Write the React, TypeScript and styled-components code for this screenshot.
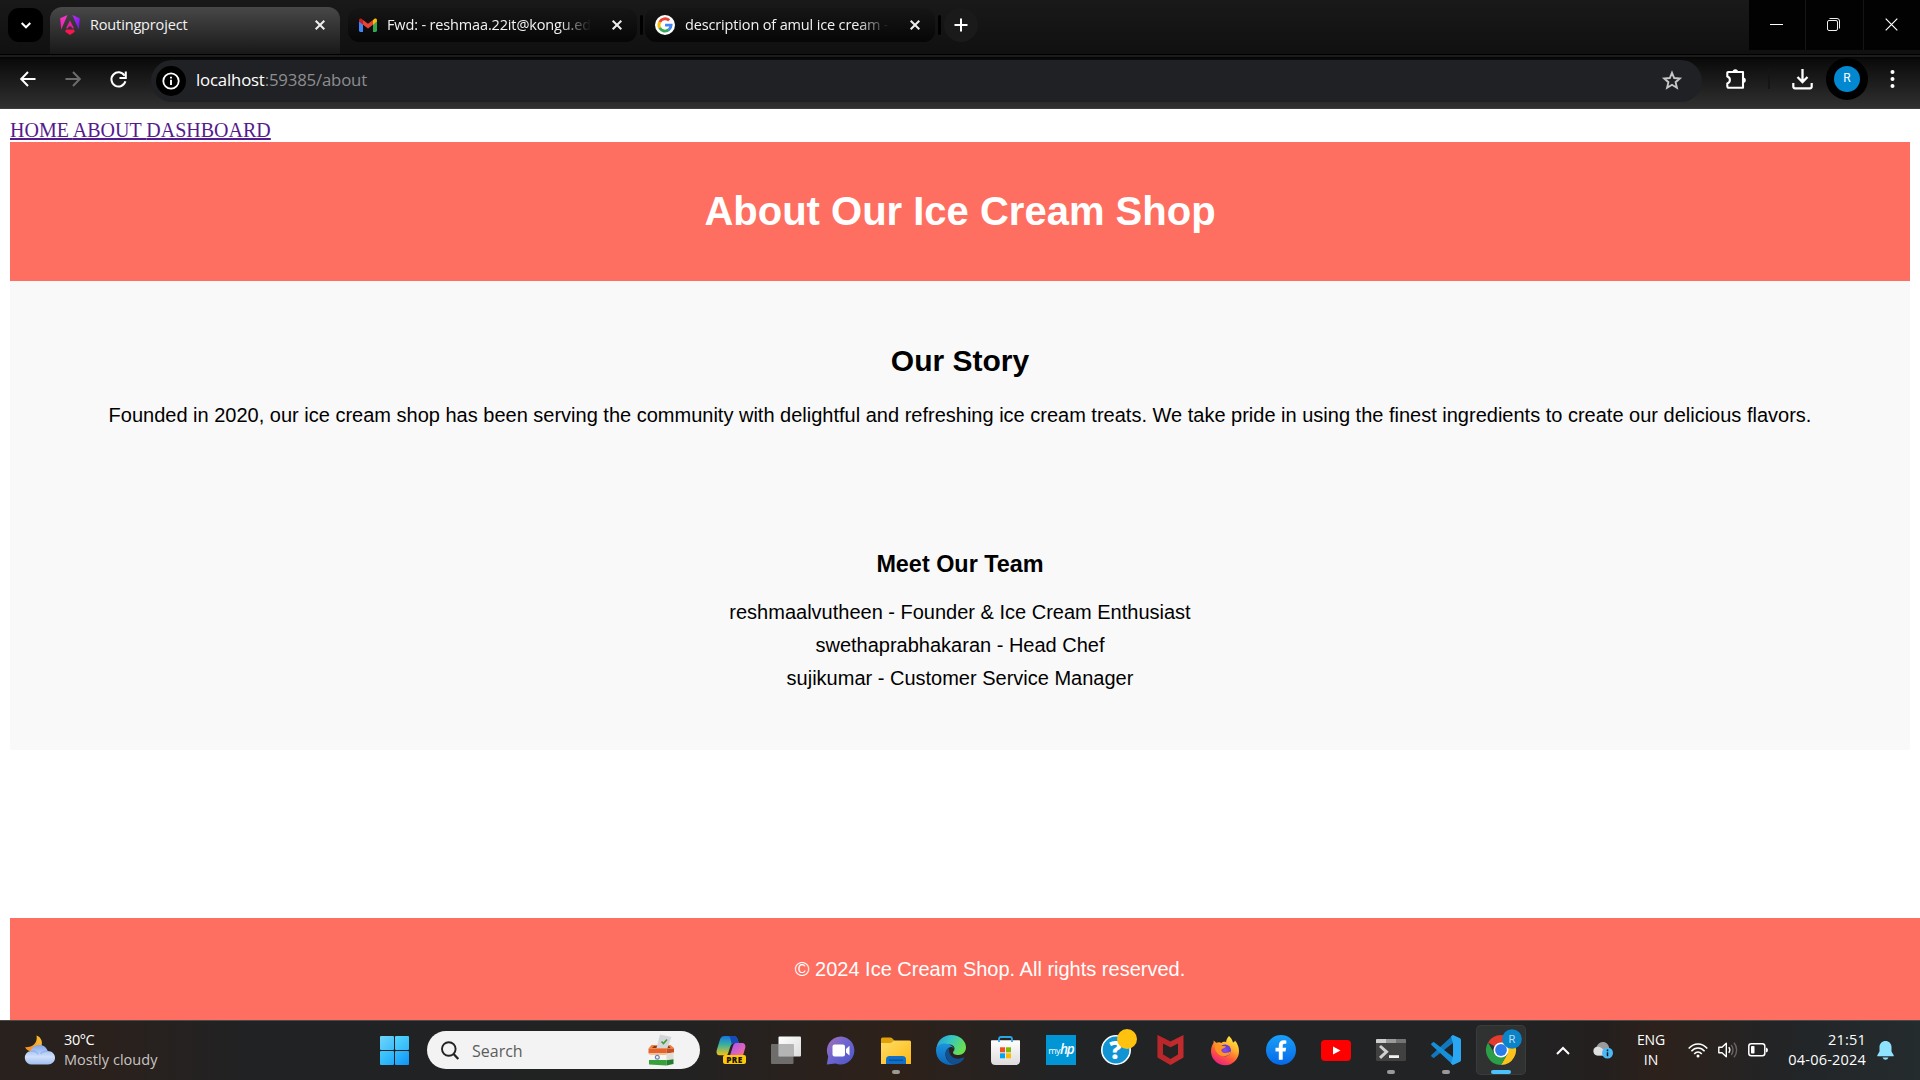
import React from "react";
import styled, { createGlobalStyle } from "styled-components";

const ui = '"Open Sans", "Noto Sans", sans-serif';
const coral = "#ff6f61";

const GlobalStyle = createGlobalStyle`
  *, *::before, *::after { box-sizing: border-box; }
  html, body { margin: 0; padding: 0; overflow: hidden; }
  svg { display: block; flex: none; overflow: visible; }
`;

const Screen = styled.div`
  width: 1920px;
  height: 1080px;
  display: flex;
  flex-direction: column;
  overflow: hidden;
  background: #fff;
`;

/* ---------- browser chrome ---------- */

const TabStrip = styled.div`
  height: 54px;
  flex: none;
  display: flex;
  align-items: flex-start;
  padding-left: 8px;
  background: linear-gradient(#191919, #101010);
`;

const TabSearch = styled.div`
  width: 35px;
  height: 34px;
  margin: 8px 7px 0 0;
  border-radius: 11px;
  background: #000;
  display: flex;
  align-items: center;
  justify-content: center;
`;

const Tab = styled.div<{ $active?: boolean; $width: number; $gap?: number }>`
  width: ${(p) => p.$width}px;
  height: ${(p) => (p.$active ? 47 : 34)}px;
  margin-top: ${(p) => (p.$active ? 7 : 8)}px;
  margin-left: ${(p) => p.$gap ?? 0}px;
  padding: ${(p) => (p.$active ? "0 10px 11px 10px" : "0 10px")};
  display: flex;
  align-items: center;
  border-radius: ${(p) => (p.$active ? "12px 12px 0 0" : "11px")};
  background: ${(p) =>
    p.$active ? "linear-gradient(#484848, #181818)" : "linear-gradient(#161616, #060606)"};
`;

const TabTitle = styled.div<{ $fade?: boolean }>`
  flex: 1;
  min-width: 0;
  margin-left: 10px;
  overflow: hidden;
  white-space: nowrap;
  color: #f2f2f2;
  font: 400 14.5px/20px ${ui};
  letter-spacing: -0.15px;
  ${(p) => p.$fade && "mask-image: linear-gradient(90deg, #000 calc(100% - 32px), transparent);"}
`;

const TabClose = styled.div`
  width: 10px;
  margin: 0 5px 0 21px;
`;

const TabDivider = styled.div`
  width: 3px;
  height: 20px;
  margin: 15px 2px 0 3px;
  border-radius: 2px;
  background: #000;
`;

const NewTab = styled.div`
  width: 34px;
  height: 34px;
  margin: 8px 0 0 1px;
  border-radius: 50%;
  background: #1a1a1a;
  display: flex;
  align-items: center;
  justify-content: center;
`;

const WindowButtons = styled.div`
  margin-left: auto;
  width: 171px;
  height: 50px;
  display: grid;
  grid-template-columns: 56px 58px 57px;
  background: #020202;
`;

const WindowButton = styled.div`
  display: flex;
  align-items: center;
  justify-content: center;
  padding: 0 2px 1px 0;
  & + & { border-left: 1px solid #151515; }
`;

const Toolbar = styled.div`
  height: 55px;
  flex: none;
  display: flex;
  align-items: center;
  padding: 0 20px 5px 20px;
  border-top: 1px solid #000;
  border-bottom: 1px solid #3e3e3e;
  background: linear-gradient(#1c1c1c 0 2px, #040404 2px, #0b0b0b 5px, #303030 100%);
`;

const NavIcons = styled.div`
  width: 131px;
  display: flex;
  gap: 29px;
`;

const Omnibox = styled.div`
  width: 1551px;
  height: 42px;
  margin-top: 3px;
  padding: 0 20px 0 5px;
  display: flex;
  align-items: center;
  border-radius: 21px;
  background: #202124;
`;

const SiteInfo = styled.div`
  width: 30px;
  height: 30px;
  border-radius: 50%;
  background: #000;
  display: flex;
  align-items: center;
  justify-content: center;
`;

const Url = styled.div`
  flex: 1;
  margin: 0 0 1px 10px;
  color: #8d8e91;
  font: 400 16.8px/24px ${ui};
  letter-spacing: -0.18px;
  b { color: #fff; font-weight: 400; }
`;

const Actions = styled.div`
  flex: 1;
  display: flex;
  align-items: center;
  padding-left: 24px;
`;

const ActionDivider = styled.div`
  width: 2px;
  height: 20px;
  margin: 0 22px 0 21px;
  background: #151515;
`;

const Avatar = styled.div`
  width: 42px;
  height: 42px;
  margin: 0 22px 0 13px;
  border-radius: 50%;
  border: 8.5px solid #000;
  background: #0288d1;
  color: #fff;
  text-align: center;
  font: 400 12px/25px Roboto, sans-serif;
`;

/* ---------- page ---------- */

const Page = styled.main`
  height: 911px;
  flex: none;
  padding: 10px 10px 0;
  overflow: hidden;
  display: flex;
  flex-direction: column;
  font: 400 20px/23px "Liberation Sans", Arial, sans-serif;
  color: #000;
`;

const Links = styled.nav`
  height: 23px;
  flex: none;
  font: 400 20px/23px "Liberation Serif", "Times New Roman", serif;
  a { color: #551a8b; text-decoration: underline; }
`;

const Banner = styled.header`
  height: 139px;
  flex: none;
  display: flex;
  align-items: center;
  justify-content: center;
  padding-bottom: 2px;
  background: ${coral};
  color: #fff;
  h1 { margin: 0; font-size: 40px; line-height: 46px; }
`;

const Story = styled.section`
  height: 469px;
  flex: none;
  padding-top: 62px;
  background: #f9f9f9;
  text-align: center;
  h2 { margin: 0 0 26px; font-size: 30px; line-height: 35px; }
  h3 { margin: 124px 0 23px; font-size: 23.4px; line-height: 27px; }
  p { margin: 0; white-space: nowrap; }
`;

const Team = styled.ul`
  margin: 0;
  padding: 0;
  list-style: none;
  display: grid;
  gap: 10px;
`;

const PageFooter = styled.footer`
  width: 1960px;
  height: 102px;
  margin-top: auto;
  padding-top: 40px;
  flex: none;
  background: ${coral};
  color: #fff;
  text-align: center;
`;

/* ---------- taskbar ---------- */

const Taskbar = styled.div`
  height: 60px;
  flex: none;
  display: flex;
  align-items: center;
  border-top: 1px solid #474b4b;
  padding-bottom: 1px;
  color: #fff;
  font: 400 14px/20px ${ui};
  background: linear-gradient(90deg, #28211e 0, #2a211d 110px, #202224 260px, #222 680px, #2b211c 830px,
    #2e211a 900px, #222324 1050px, #222324 1500px, #231f1e 1600px, #2d211b 1660px, #222426 1780px, #252c2e 1920px);
`;

const Weather = styled.div`
  width: 355px;
  padding-left: 25px;
  display: flex;
  align-items: center;
  gap: 9px;
`;

const WeatherText = styled.div`
  font-size: 14.5px;
  letter-spacing: 0.05px;
  span { display: block; color: #c8c5c3; }
  b { display: block; font-weight: 400; letter-spacing: -0.4px; }
`;

const Start = styled.div`
  width: 29px;
  height: 29px;
  margin: 0 18px 0 25px;
  display: grid;
  grid-template-columns: 14px 14px;
  gap: 1px;
  i { background: linear-gradient(135deg, #6fd5fb, #3dbdf8); border-radius: 1px; }
  i:nth-child(2) { background: linear-gradient(135deg, #55d6fd, #2fb6f9); }
  i:nth-child(3) { background: linear-gradient(135deg, #46cbfb, #21a9f9); }
  i:nth-child(4) { background: linear-gradient(135deg, #35bdfa, #0e94f8); }
`;

const Search = styled.div`
  width: 273px;
  height: 38px;
  margin-right: 6px;
  padding: 0 25px 0 14px;
  display: flex;
  align-items: center;
  border-radius: 19px;
  background: #f3f3f3;
  color: #5c5c5c;
  font-size: 16px;
  span { flex: 1; margin: 1px 0 0 13px; }
`;

const Dock = styled.div`
  display: flex;
  gap: 5px;
`;

const DockItem = styled.div<{ $active?: boolean; $mark?: string; $markWidth?: number }>`
  position: relative;
  width: 50px;
  height: 50px;
  display: flex;
  align-items: center;
  justify-content: center;
  border-radius: 5px;
  ${(p) => p.$active && "background: #303131; box-shadow: inset 0 0 0 1px #3a3b3b;"}
  ${(p) =>
    p.$mark &&
    `&::after {
      content: "";
      position: absolute;
      left: 50%;
      bottom: 1px;
      width: ${p.$markWidth}px;
      height: 4px;
      border-radius: 2px;
      transform: translateX(-50%);
      background: ${p.$mark};
    }`}
`;

const Tray = styled.div`
  flex: 1;
  display: flex;
  align-items: center;
  padding: 0 26px 0 30px;
`;

const Overflow = styled.div`
  margin-right: 23px;
`;

const Lang = styled.div`
  width: 30px;
  margin: 0 22px 0 23px;
  text-align: center;
  letter-spacing: -0.1px;
`;

const StatusIcons = styled.div`
  display: flex;
  align-items: center;
  gap: 10px;
`;

const Clock = styled.div`
  margin-left: auto;
  margin-right: 11px;
  text-align: right;
  white-space: nowrap;
  font-size: 14.5px;
  letter-spacing: 0.2px;
`;

/* ---------- icons ---------- */

const Close = ({ size = 10, width = 2, color = "#eee" }) => (
  <svg width={size} height={size} viewBox={`0 0 ${size} ${size}`}>
    <path d={`M.7 .7 ${size - 0.7} ${size - 0.7}M${size - 0.7} .7 .7 ${size - 0.7}`} stroke={color} strokeWidth={width} />
  </svg>
);

const AngularIcon = () => (
  <svg width="20" height="20" viewBox="0 0 20 20">
    <defs>
      <linearGradient id="ngL" x1="0" y1="0" x2="0" y2="1"><stop stopColor="#f637d0" /><stop offset="1" stopColor="#f01fa4" /></linearGradient>
      <linearGradient id="ngR" x1="0" y1="0" x2="1" y2="1"><stop stopColor="#c22df0" /><stop offset="1" stopColor="#6b14f5" /></linearGradient>
    </defs>
    <path d="M7.6 0 .2 3.2 1.2 14.4Z" fill="url(#ngL)" />
    <path d="M12.4 0 19.8 3.2 18.8 14.4Z" fill="url(#ngR)" />
    <path d="M10 5.3 14 13.3H12L11.3 11.6H8.7L8 13.3H6Z" fill="#e021a0" />
    <path d="M6 14.6H14L14.8 16.8 10 20 5.2 16.8Z" fill="#fa1450" />
  </svg>
);

const GmailIcon = () => (
  <svg width="19" height="14" viewBox="-1 0 19 14">
    <path d="M0 3 4 6V14H1.4Q0 14 0 12.6Z" fill="#4285f4" />
    <path d="M14 6 18 3V12.6Q18 14 16.6 14H14Z" fill="#34a853" />
    <path d="M14 2 15.2 .9C16.4 -.1 18 .6 18 2.2V3.6L14 6.7Z" fill="#fbbc04" />
    <path d="M4 2 9 5.8 14 2V6.7L9 10.5 4 6.7Z" fill="#ea4335" />
    <path d="M0 2.2C0 .6 1.6 -.1 2.8 .9L4 2V6.7L0 3.6Z" fill="#c5221f" />
  </svg>
);

const GoogleIcon = () => (
  <svg width="20" height="20" viewBox="0 0 20 20">
    <circle cx="10" cy="10" r="10" fill="#fff" />
    <g fill="none" strokeWidth="2.9">
      <path d="M14.2 5.3A6.1 6.1 0 0 0 4.7 7.1" stroke="#ea4335" />
      <path d="M4.8 6.9A6.1 6.1 0 0 0 4.8 13.1" stroke="#fbbc05" />
      <path d="M4.7 12.9A6.1 6.1 0 0 0 13.9 14.7" stroke="#34a853" />
      <path d="M10.1 10.1H16.1A6.1 6.1 0 0 1 13.7 14.9" stroke="#4285f4" />
    </g>
  </svg>
);

const BackIcon = ({ color = "#fff", flip = false }) => (
  <svg width="16" height="16" viewBox="0 0 16 16">
    <path transform={flip ? "translate(16) scale(-1 1)" : undefined} d="M8 1 1.2 8 8 15M1.2 8H15.5" fill="none" stroke={color} strokeWidth="2" />
  </svg>
);

const ReloadIcon = () => (
  <svg width="17" height="17" viewBox="0 0 17 17">
    <path d="M14.6 4.7A7.1 7.1 0 1 0 15.4 10.3" fill="none" stroke="#fff" strokeWidth="2" />
    <path d="M15.8 .6V7H9.5" fill="none" stroke="#fff" strokeWidth="2" />
  </svg>
);

const InfoIcon = () => (
  <svg width="18" height="18" viewBox="0 0 18 18">
    <circle cx="9" cy="9" r="7.7" fill="none" stroke="#fff" strokeWidth="1.8" />
    <path d="M9 7.8V13M9 4.7V6.6" stroke="#fff" strokeWidth="1.9" />
  </svg>
);

const StarIcon = () => (
  <svg width="20" height="19" viewBox="0 0 20 19">
    <path d="M10 1.8 12.2 7 17.8 7.5 13.6 11.2 14.9 16.7 10 13.8 5.1 16.700 6.4 11.2 2.2 7.5 7.8 7Z" fill="none" stroke="#c6c7c8" strokeWidth="1.9" />
  </svg>
);

const PuzzleIcon = () => (
  <svg width="21" height="21" viewBox="0 0 21 21">
    <path d="M2.2 3H17V18.8H3Q1.3 18.8 1.3 17.2V14.4Q3.9 13.6 3.9 11 3.9 8.4 1.3 7.6V4Q1.3 3 2.2 3Z" fill="none" stroke="#fff" strokeWidth="2.1" strokeLinejoin="round" />
    <path d="M6.6 3A2.7 2.7 0 0 1 12 3ZM17 8.4A2.8 2.8 0 0 1 17 14Z" fill="#fff" />
  </svg>
);

const DownloadIcon = () => (
  <svg width="21" height="21" viewBox="0 0 21 21">
    <path d="M10.5 0V12M5.500 8 10.500 13 15.500 8" fill="none" stroke="#fff" strokeWidth="2.3" />
    <path d="M1.3 14V17.6Q1.3 19.3 3 19.3H18Q19.7 19.3 19.7 17.6V14" fill="none" stroke="#fff" strokeWidth="2.2" />
  </svg>
);

const DotsIcon = () => (
  <svg width="5" height="18" viewBox="0 0 5 18" fill="#fff">
    <circle cx="2.5" cy="2" r="2" /><circle cx="2.5" cy="9" r="2" /><circle cx="2.5" cy="16" r="2" />
  </svg>
);

const WeatherIcon = () => (
  <svg width="30" height="30" viewBox="0 0 30 30">
    <defs>
      <linearGradient id="moon" x1="0" y1="1" x2="1" y2="0"><stop stopColor="#f5831f" /><stop offset="1" stopColor="#fcc62f" /></linearGradient>
      <linearGradient id="cloud" x1="0" y1="0" x2="0" y2="1"><stop stopColor="#7ea5ec" /><stop offset=".6" stopColor="#cfe0fb" /><stop offset="1" stopColor="#9fbcf0" /></linearGradient>
    </defs>
    <path d="M11.5 .5C13 7.5 8 12.5 0 12.3 2 16 6 17.5 10 16.5 15.5 15 18 10 16.5 5.5 15.5 2.8 14 1.2 11.5 .5Z" fill="url(#moon)" />
    <path d="M7.2 29.5A6.8 6.8 0 0 1 5.6 16C7.5 11.5 11 10 14.5 10 19 10 21.7 12.7 22.6 16 27 16 30 18.8 30 22.8 30 26.6 27 29.5 23 29.5Z" fill="url(#cloud)" />
    <path d="M5.6 16.3C9 15.4 12 17.2 13.3 19.5M22.6 16C19.5 16 17 17 15.5 19" fill="none" stroke="#7fa2e6" strokeWidth="1.3" opacity=".55" />
  </svg>
);

const SearchIcon = () => (
  <svg width="18" height="19" viewBox="0 0 18 19">
    <circle cx="7.8" cy="8" r="6.8" fill="none" stroke="#222" strokeWidth="1.9" />
    <path d="M12.6 13 17.3 18" stroke="#222" strokeWidth="2.2" />
  </svg>
);

const BallotIcon = () => (
  <svg width="27" height="32" viewBox="0 0 27 32">
    <path d="M3.500 11H22.500L26.500 14.500H.5Z" fill="#f0813f" />
    <path d="M6 12H21L22.500 14H4Z" fill="#8c3614" />
    <path d="M12 .5 23.500 3 19.500 14H8.500Z" fill="#d5d6dc" />
    <path d="M13.500 7.500 15.500 9.500 19 5.500" fill="none" stroke="#3f9e2c" strokeWidth="1.600" />
    <path d="M.5 14.500H18.500V19.500H.5Z" fill="#e5642a" />
    <path d="M18.500 14.500H26V18.500L18.500 19.500Z" fill="#c94f1c" />
    <path d="M1.500 19.500H18.500V26.500H1.500Z" fill="#f7f6f1" />
    <path d="M18.500 19.500 25.500 18.500V25.500L18.500 26.500Z" fill="#dddcd6" />
    <path d="M1.500 19.500H18.500V20.800H1.500Z" fill="#f3b27c" />
    <path d="M1 26H18.500V31.500L1 30.500Z" fill="#37a03a" />
    <path d="M18.500 26.200 25.500 25.200V30L18.500 31.500Z" fill="#237f2b" />
    <circle cx="9.300" cy="23.300" r="1.900" fill="none" stroke="#6a7fc0" strokeWidth="1.200" />
  </svg>
);

const PreText = styled.text`
  font: 800 8.2px ${ui};
  letter-spacing: 0.4px;
`;

const CopilotIcon = () => (
  <svg width="30" height="30" viewBox="0 0 30 30">
    <defs>
      <linearGradient id="cpA" x1="0" y1="0" x2="0" y2="1"><stop stopColor="#1675e0" /><stop offset=".45" stopColor="#38b0a0" /><stop offset="1" stopColor="#f4c313" /></linearGradient>
      <linearGradient id="cpB" x1="0" y1="0" x2="1" y2="1"><stop stopColor="#a255f4" /><stop offset=".6" stopColor="#dd62c0" /><stop offset="1" stopColor="#fb7c70" /></linearGradient>
    </defs>
    <path d="M8.5 1H18C20 1 21 2.5 21.5 4L22.8 8H19C16 8 15 9.5 14 12.5L12 18.5C11.5 20 10.5 20.3 9 20.3H4C1 20.3 0 18 .8 15L4 4.5C4.8 2 6.5 1 8.5 1Z" fill="url(#cpA)" />
    <path d="M12 1H18C20 1 21 2.5 21.5 4L22.8 8H19C17 8 16.500 8.500 15.800 9.500L14.500 4C14 2 13.500 1 12 1Z" fill="#1649ba" />
    <path d="M20 8H26C29 8 30 10.5 29 13.5L27 20.5H14L17 11C17.7 9 18.3 8 20 8Z" fill="url(#cpB)" />
    <rect x="7" y="20" width="23" height="9" rx="2" fill="#fdc70c" />
    <PreText x="10.2" y="27.6" fill="#16130a">PRE</PreText>
  </svg>
);

const TaskViewIcon = () => (
  <svg width="30" height="28" viewBox="0 0 30 28">
    <defs><linearGradient id="tv" x1="0" y1="0" x2="1" y2="1"><stop stopColor="#fff" /><stop offset="1" stopColor="#dcdcdc" /></linearGradient></defs>
    <rect x="7.5" y=".5" width="22.5" height="20" rx="1" fill="url(#tv)" />
    <rect x="0" y="8" width="22.5" height="20" rx="1" fill="#777" opacity=".88" />
    <rect x="7.5" y="8" width="15" height="12.5" fill="#b4b4b4" />
  </svg>
);

const ChatIcon = () => (
  <svg width="30" height="29" viewBox="0 0 30 29">
    <defs><linearGradient id="chat" x1="0" y1="0" x2="1" y2="1"><stop stopColor="#a86fb5" /><stop offset=".45" stopColor="#6f66cf" /><stop offset="1" stopColor="#4b54c8" /></linearGradient></defs>
    <path d="M15 .5A14 14 0 1 1 9.5 27.6L.8 28.5 2.2 20.5A14 14 0 0 1 15 .5Z" fill="url(#chat)" />
    <rect x="6.5" y="8.5" width="12.5" height="12" rx="2" fill="#fff" />
    <path d="M20 13 23.5 9.8V19.5L20 16.5Z" fill="#fff" />
  </svg>
);

const FolderIcon = () => (
  <svg width="30" height="27" viewBox="0 0 30 27">
    <defs><linearGradient id="fold" x1="0" y1="0" x2="1" y2="1"><stop stopColor="#ffdd68" /><stop offset="1" stopColor="#fbb914" /></linearGradient></defs>
    <path d="M0 2Q0 .5 1.5 .5H9.5Q11 .5 12 2L13.5 4V9H0Z" fill="#e0a208" />
    <path d="M0 6H10L13 3.5H28.5Q30 3.5 30 5V27H0Z" fill="url(#fold)" />
    <path d="M5 27V22.5Q5 19 8.5 19H21.5Q25 19 25 22.5V27Z" fill="#0f6fc9" />
    <path d="M8 23.2H22" stroke="#0a4f98" strokeWidth="1.3" />
  </svg>
);

const EdgeIcon = () => (
  <svg width="30" height="30" viewBox="0 0 30 30">
    <defs>
      <linearGradient id="egT" x1="0" y1="0" x2="1" y2=".4"><stop stopColor="#249bdc" /><stop offset=".5" stopColor="#36c5c3" /><stop offset="1" stopColor="#68df52" /></linearGradient>
      <linearGradient id="egB" x1="0" y1="0" x2="0" y2="1"><stop stopColor="#1b94df" /><stop offset="1" stopColor="#0c65b6" /></linearGradient>
    </defs>
    <path d="M.5 13C1.5 5 8 0 15.2 0 24 0 30 6 30 12.5 30 17 26.5 20 22.5 20 18.5 20 17 18.5 17 17.5 17 16.5 18.5 15.8 18.5 13.5 18.5 9.8 13 7 .5 13Z" fill="url(#egT)" />
    <path d="M.3 12.5C3 8 9.5 7.5 13.5 9.5 16.5 11 18 13 18.3 14 15 9.5 10 13.5 9.5 18.5 9 24 13.5 29.5 19.5 29.2 11 32 .3 27 0 15.5Z" fill="url(#egB)" />
    <path d="M13 13C10.5 14.5 9.5 17 9.7 19.5 10.3 26 16 30 20 29.3 24 28.3 26.5 26.2 28.2 23.3 28.6 22.5 28 22.2 27.4 22.6 19 26 12 21 13 13Z" fill="#114f91" />
  </svg>
);

const StoreIcon = () => (
  <svg width="30" height="29" viewBox="0 0 30 29">
    <defs><linearGradient id="st" x1="0" y1="0" x2="0" y2="1"><stop stopColor="#fff" /><stop offset="1" stopColor="#dcdcde" /></linearGradient></defs>
    <path d="M8 6V3Q8 1 10 1H19Q21 1 21 3V6" fill="none" stroke="#2aa5e8" strokeWidth="1.8" />
    <path d="M0 5Q0 4.3 .7 4.3H28.3Q29 4.3 29 5V24.5Q29 29 24.5 29H4.5Q0 29 0 24.5Z" fill="url(#st)" />
    <path d="M8 4V6M21 4V6" stroke="#2aa5e8" strokeWidth="1.8" />
    <rect x="9" y="11.3" width="5" height="5" fill="#f25022" /><rect x="15" y="11.3" width="5" height="5" fill="#7fba00" />
    <rect x="9" y="17.3" width="5" height="5" fill="#00a4ef" /><rect x="15" y="17.3" width="5" height="5" fill="#ffb900" />
  </svg>
);

const HpTile = styled.div`
  width: 30px;
  height: 30px;
  background: #0096d6;
  color: #fff;
  text-align: center;
  font: 400 9px/28px "Open Sans", sans-serif;
  letter-spacing: -0.6px;
  white-space: nowrap;
  b { font: italic 600 13.5px/28px "Open Sans", sans-serif; letter-spacing: -1px; }
`;

const HelpText = styled.text`
  font: 800 25px "Open Sans", sans-serif;
`;

const HelpIcon = () => (
  <svg width="30" height="30" viewBox="0 0 30 30">
    <circle cx="15" cy="15" r="14.2" fill="#1094d4" stroke="#fff" strokeWidth="1.6" />
    <HelpText x="14.5" y="24" textAnchor="middle" fill="#fff">?</HelpText>
    <circle cx="26" cy="4" r="10" fill="#ffc20e" />
  </svg>
);

const McAfeeIcon = () => (
  <svg width="28" height="30" viewBox="0 0 28 30">
    <path d="M.5 0 13.500 6.5 26.500 0V22.5L13.500 30 .5 22.5Z" fill="#c22b2e" />
    <path d="M6 8.5 13.500 12.3 21 8.5V19.5L13.500 24 6 19.5Z" fill="#242323" />
    <path d="M.5 0 13.500 6.5V12.3L6 8.5V19.5L13.500 24V30L.5 22.5Z" fill="#a91f26" opacity=".35" />
  </svg>
);

const FirefoxIcon = () => (
  <svg width="30" height="29" viewBox="0 0 30 29">
    <defs>
      <linearGradient id="ff" x1=".8" y1="0" x2=".25" y2="1"><stop stopColor="#fff04a" /><stop offset=".35" stopColor="#ffb02e" /><stop offset=".65" stopColor="#ff5b36" /><stop offset="1" stopColor="#e8188c" /></linearGradient>
      <radialGradient id="ffp"><stop stopColor="#8b4bf2" /><stop offset="1" stopColor="#5b3bc4" /></radialGradient>
    </defs>
    <path d="M18 0C20 2 21.5 4 22 6.5 23 6.3 23.7 5.5 24 4.5 26.5 7.5 28 11 28 15A14 14 0 0 1 0 15.5C0 12 1 9 2.5 7L2.7 4.5 5.2 6.8C7 6 9 6 10.5 7 12 5.5 14.3 5.8 15 6.2 15.3 3.5 16.5 1.5 18 0Z" fill="url(#ff)" />
    <circle cx="14" cy="14.5" r="6" fill="url(#ffp)" />
    <path d="M4 9C8 8 10 10.5 15 10.3 14 12.5 11.5 12.5 10.5 13.5 10 15.5 12 17 14 17 17 17 18 16 20 15.5 19 20 13 21 9.5 19.5 5.5 17.5 3 13 4 9Z" fill="#ff9324" />
  </svg>
);

const FacebookIcon = () => (
  <svg width="30" height="30" viewBox="0 0 30 30">
    <defs><linearGradient id="fb" x1="0" y1="0" x2="0" y2="1"><stop stopColor="#18a0f8" /><stop offset="1" stopColor="#0668e8" /></linearGradient></defs>
    <circle cx="15" cy="15" r="15" fill="url(#fb)" />
    <path d="M12.8 24.8V16.5H9.5V12.8H12.8V10.5C12.8 7 14.8 5.2 17.8 5.2L20.3 5.4V8.7H18.5C17 8.7 16.7 9.5 16.7 10.7V12.8H20.2L19.5 16.5H16.7V24.8Z" fill="#fff" />
  </svg>
);

const YoutubeIcon = () => (
  <svg width="30" height="21" viewBox="0 0 30 21">
    <rect width="30" height="21" rx="4" fill="#f00" />
    <path d="M12 6.4 19.5 10.5 12 14.6Z" fill="#fff" />
  </svg>
);

const TerminalIcon = () => (
  <svg width="30" height="22" viewBox="0 0 30 22">
    <rect width="30" height="22" rx="1" fill="#414141" />
    <path d="M0 4V1Q0 0 1 0H10V4Z" fill="#cecece" /><path d="M10 0H20V4H10Z" fill="#9a9a9a" /><path d="M20 0H29Q30 0 30 1V4H20Z" fill="#747474" />
    <path d="M4 7 10.5 12.8 4 18.8" fill="none" stroke="#cfcfcf" strokeWidth="3" />
    <rect x="13" y="16.2" width="10" height="2.8" fill="#f1f1f1" />
  </svg>
);

const VsCodeIcon = () => (
  <svg width="30" height="30" viewBox="0 0 30 30">
    <path d="M22 8 3.200 22.700Q2.300 23.200 1.700 22.600L.4 21.400Q-.2 20.700 .4 20.100L20.500 1.500 22 0Z" fill="#1178bd" />
    <path d="M22 22 3.200 7.300Q2.300 6.800 1.700 7.400L.4 8.600Q-.2 9.300 .4 9.900L20.500 28.5 22 30Z" fill="#178fd8" />
    <path d="M22 0 29 3.3Q30 3.8 30 5V25Q30 26.2 29 26.7L22 30 20 28.5 22 22V8L20 1.5Z" fill="#2aa7f2" />
  </svg>
);

const BadgeText = styled.text`
  font: 400 11px Roboto, sans-serif;
`;

const ChromeIcon = () => (
  <svg width="30" height="30" viewBox="0 0 30 30">
    <path d="M15 15 2 7.5A15 15 0 0 1 28 7.5H15Z" fill="#e33b2e" />
    <path d="M15 7.5H28A15 15 0 0 1 15 30L21.5 18.75Z" fill="#fcc31c" />
    <path d="M2 7.5A15 15 0 0 0 15 30L21.5 18.75 15 22 8.5 18.75Z" fill="#2b9f48" />
    <circle cx="15" cy="15" r="7.5" fill="#fff" />
    <circle cx="15" cy="15" r="5.9" fill="#2b7bea" />
    <circle cx="26" cy="4" r="9.8" fill="#0b83c9" />
    <BadgeText x="26" y="8" textAnchor="middle" fill="#b9dcf2">R</BadgeText>
  </svg>
);

const ChevronUp = () => (
  <svg width="14" height="9" viewBox="0 0 14 9"><path d="M1 8 7 2 13 8" fill="none" stroke="#fff" strokeWidth="2" /></svg>
);

const OneDriveIcon = () => (
  <svg width="20" height="18" viewBox="0 0 20 18">
    <path d="M4.5 14.5A4.5 4.5 0 0 1 3.5 5.7C5 2 8 .5 11 1 14 1.5 15.5 4 16 6L16 14.5Z" fill="#9b9b9b" />
    <path d="M4.5 14.5A4.4 4.4 0 0 1 4.4 5.8C6.5 5.5 8.5 6.5 9.5 8L15 11 12 14.5Z" fill="#dedede" />
    <circle cx="14.5" cy="12" r="5.5" fill="#4cb9f5" />
    <path d="M14.5 11.2V15.2M14.5 8.6V10.2" stroke="#0b1b28" strokeWidth="1.5" />
  </svg>
);

const WifiIcon = () => (
  <svg width="20" height="15" viewBox="0 0 20 15" fill="none" stroke="#fff" strokeWidth="1.5">
    <path d="M.7 5.6C6 -.5 14 -.5 19.3 5.6M3.4 8.3C7.2 4 12.8 4 16.6 8.3M6.2 11C8.4 8.4 11.6 8.4 13.8 11" />
    <circle cx="10" cy="13" r="1.5" fill="#fff" stroke="none" />
  </svg>
);

const SpeakerIcon = () => (
  <svg width="20" height="16" viewBox="0 0 20 16" fill="none" strokeWidth="1.4">
    <path d="M.8 5.2H4L8.3 1.2V14.8L4 10.8H.8Z" stroke="#fff" strokeLinejoin="round" />
    <path d="M10.8 5.2C12 6.8 12 9.2 10.8 10.8" stroke="#fff" />
    <path d="M13.3 3C15.5 5.8 15.5 10.2 13.3 13M16 .8C19.5 5 19.5 11 16 15.2" stroke="#696563" />
  </svg>
);

const BatteryIcon = () => (
  <svg width="20" height="14" viewBox="0 0 20 14">
    <rect x=".8" y=".8" width="16" height="12" rx="2.5" fill="none" stroke="#fff" strokeWidth="1.5" />
    <rect x="3" y="3" width="3.5" height="7.6" rx=".8" fill="#fff" />
    <path d="M18 4.5Q20 5 20 7 20 9 18 9.5Z" fill="#fff" />
  </svg>
);

const BellIcon = () => (
  <svg width="17" height="19" viewBox="0 0 17 19" fill="#8fe3ff">
    <path d="M8.5 0C12 0 14.5 2.7 14.5 6V10.5L16.7 14.2V15.3H.3V14.2L2.5 10.5V6C2.5 2.7 5 0 8.5 0Z" />
    <path d="M5.5 16.6H11.5Q10.5 18.8 8.5 18.8 6.5 18.8 5.5 16.6Z" />
  </svg>
);

/* ---------- screen ---------- */

const team = [
  "reshmaalvutheen - Founder & Ice Cream Enthusiast",
  "swethaprabhakaran - Head Chef",
  "sujikumar - Customer Service Manager",
];

type DockEntry = { icon: React.ReactNode; mark?: string; markWidth?: number; active?: boolean };

const dock: DockEntry[] = [
  { icon: <CopilotIcon /> },
  { icon: <TaskViewIcon /> },
  { icon: <ChatIcon /> },
  { icon: <FolderIcon />, mark: "#9d9997", markWidth: 8 },
  { icon: <EdgeIcon /> },
  { icon: <StoreIcon /> },
  { icon: <HpTile>my<b>hp</b></HpTile> },
  { icon: <HelpIcon /> },
  { icon: <McAfeeIcon /> },
  { icon: <FirefoxIcon /> },
  { icon: <FacebookIcon /> },
  { icon: <YoutubeIcon /> },
  { icon: <TerminalIcon />, mark: "#999", markWidth: 8 },
  { icon: <VsCodeIcon />, mark: "#999", markWidth: 8 },
  { icon: <ChromeIcon />, mark: "#4cc2ff", markWidth: 20, active: true },
];

export default function App() {
  return (
    <Screen>
      <GlobalStyle />
      <TabStrip>
        <TabSearch>
          <svg width="10" height="7" viewBox="0 0 10 7"><path d="M.7 1 5 5.3 9.3 1" fill="none" stroke="#fff" strokeWidth="2" /></svg>
        </TabSearch>
        <Tab $active $width={290}>
          <AngularIcon />
          <TabTitle>Routingproject</TabTitle>
          <TabClose><Close /></TabClose>
        </Tab>
        <Tab $width={289} $gap={8}>
          <GmailIcon />
          <TabTitle $fade>Fwd: - reshmaa.22it@kongu.edu</TabTitle>
          <TabClose><Close /></TabClose>
        </Tab>
        <TabDivider />
        <Tab $width={290}>
          <GoogleIcon />
          <TabTitle $fade>description of amul ice cream -</TabTitle>
          <TabClose><Close /></TabClose>
        </Tab>
        <TabDivider />
        <NewTab>
          <svg width="14" height="14" viewBox="0 0 14 14"><path d="M7 .5V13.5M.5 7H13.5" stroke="#fff" strokeWidth="2" /></svg>
        </NewTab>
        <WindowButtons>
          <WindowButton>
            <svg width="13" height="13" viewBox="0 0 13 13"><path d="M0 6.500H13" stroke="#fff" strokeWidth="1" /></svg>
          </WindowButton>
          <WindowButton>
            <svg width="13" height="13" viewBox="0 0 13 13" fill="none" stroke="#eee">
              <rect x=".5" y="2.5" width="10" height="10" rx="1.5" />
              <path d="M2.5 .5H10Q12.5 .5 12.5 3V10.5" />
            </svg>
          </WindowButton>
          <WindowButton><Close size={13} width={1.2} color="#fff" /></WindowButton>
        </WindowButtons>
      </TabStrip>

      <Toolbar>
        <NavIcons>
          <BackIcon />
          <BackIcon flip color="#6d6d6d" />
          <ReloadIcon />
        </NavIcons>
        <Omnibox>
          <SiteInfo><InfoIcon /></SiteInfo>
          <Url><b>localhost</b>:59385/about</Url>
          <StarIcon />
        </Omnibox>
        <Actions>
          <PuzzleIcon />
          <ActionDivider />
          <DownloadIcon />
          <Avatar>R</Avatar>
          <DotsIcon />
        </Actions>
      </Toolbar>

      <Page>
        <Links>
          <a>HOME </a><a>ABOUT </a><a>DASHBOARD</a>
        </Links>
        <Banner><h1>About Our Ice Cream Shop</h1></Banner>
        <Story>
          <h2>Our Story</h2>
          <p>
            Founded in 2020, our ice cream shop has been serving the community with delightful and refreshing ice cream
            treats. We take pride in using the finest ingredients to create our delicious flavors.
          </p>
          <h3>Meet Our Team</h3>
          <Team>{team.map((member) => <li key={member}>{member}</li>)}</Team>
        </Story>
        <PageFooter>© 2024 Ice Cream Shop. All rights reserved.</PageFooter>
      </Page>

      <Taskbar>
        <Weather>
          <WeatherIcon />
          <WeatherText><b>30°C</b><span>Mostly cloudy</span></WeatherText>
        </Weather>
        <Start><i /><i /><i /><i /></Start>
        <Search>
          <SearchIcon />
          <span>Search</span>
          <BallotIcon />
        </Search>
        <Dock>
          {dock.map((item, index) => (
            <DockItem key={index} $active={item.active} $mark={item.mark} $markWidth={item.markWidth}>
              {item.icon}
            </DockItem>
          ))}
        </Dock>
        <Tray>
          <Overflow><ChevronUp /></Overflow>
          <OneDriveIcon />
          <Lang>ENG<br />IN</Lang>
          <StatusIcons>
            <WifiIcon />
            <SpeakerIcon />
            <BatteryIcon />
          </StatusIcons>
          <Clock>21:51<br />04-06-2024</Clock>
          <BellIcon />
        </Tray>
      </Taskbar>
    </Screen>
  );
}
